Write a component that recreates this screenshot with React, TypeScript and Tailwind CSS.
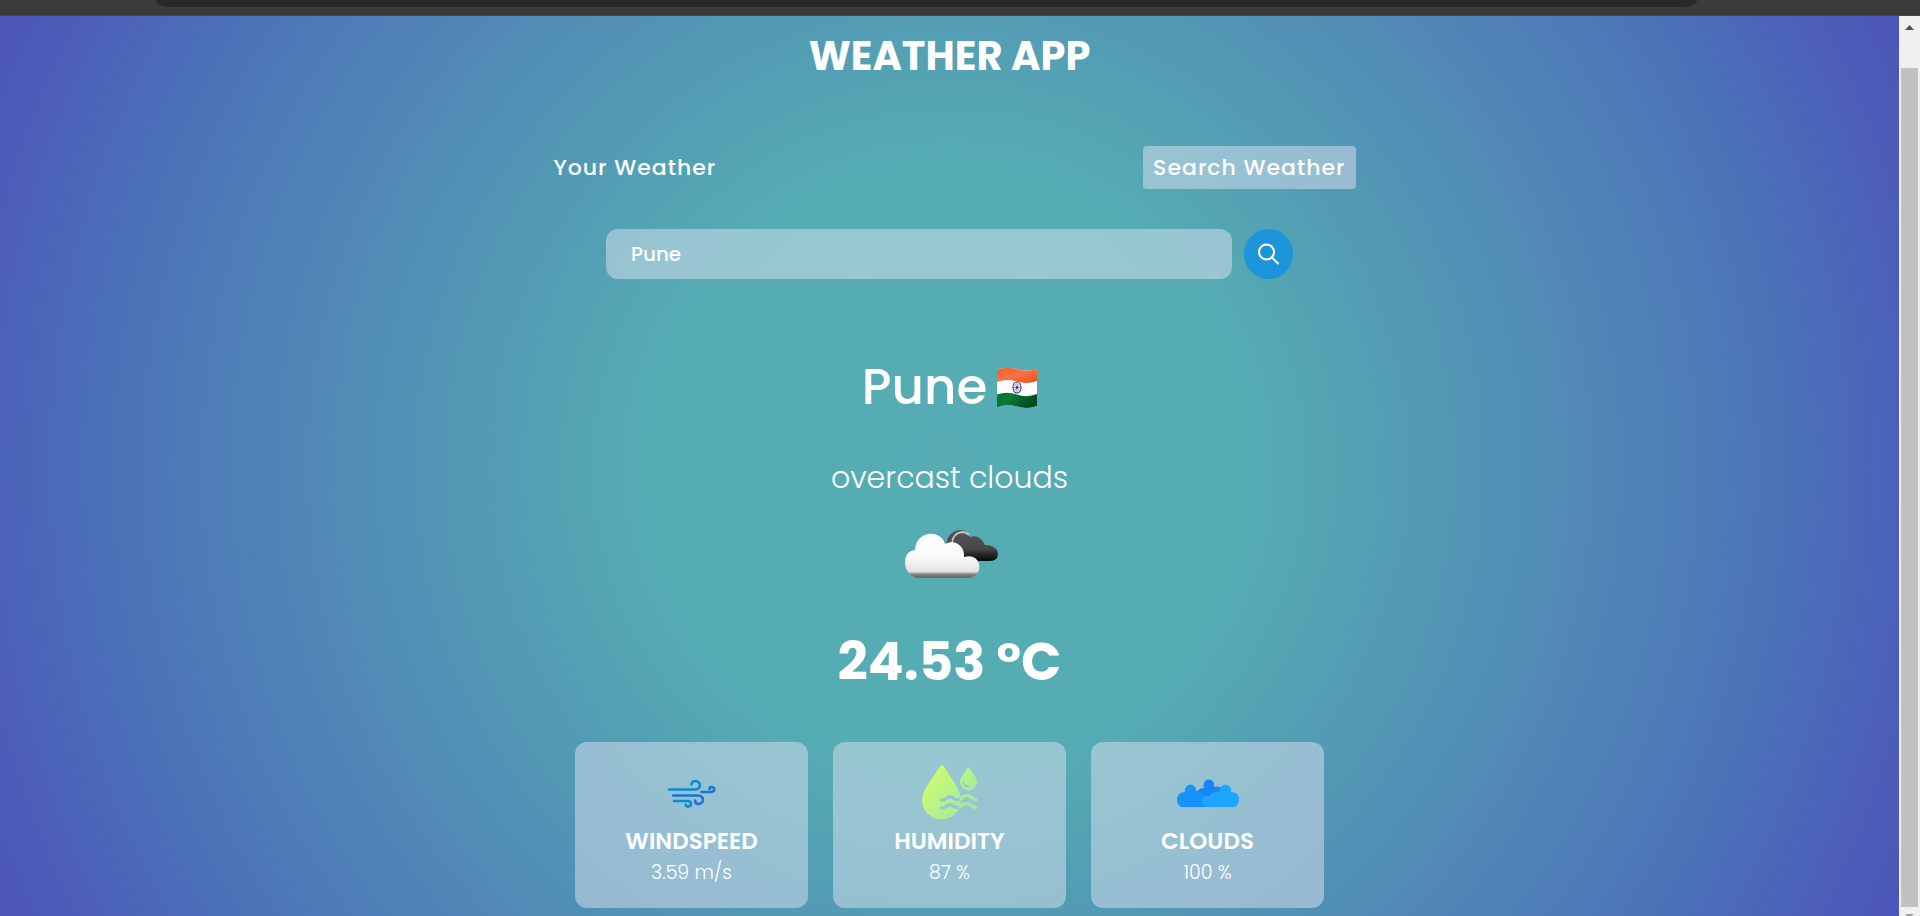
import React from "react";

const FONT = "font-[Poppins,'Open_Sans','Noto_Sans',sans-serif]";

function FlagIcon() {
  return (
    <svg viewBox="0 0 40 40" className="mt-0.5 h-10 w-10" role="img" aria-label="India">
      <defs>
        <linearGradient id="saffron" x1="0" y1="0" x2="1" y2="1">
          <stop offset="0" stopColor="#e8642f" />
          <stop offset="0.5" stopColor="#fb7040" />
          <stop offset="1" stopColor="#ea5220" />
        </linearGradient>
        <linearGradient id="green" x1="0" y1="0" x2="1" y2="0.4">
          <stop offset="0" stopColor="#087038" />
          <stop offset="0.4" stopColor="#0a7a38" />
          <stop offset="1" stopColor="#02481f" />
        </linearGradient>
      </defs>
      <path d="M0 1.600Q10-1.800 20 1.200T40 1V38Q30 41.500 20 38.500T0 39.500Z" fill="#fff" />
      <path d="M0 1.600Q10-1.800 20 1.200T40 1V13Q30 16.500 20 13.500T0 14Z" fill="url(#saffron)" />
      <path d="M0 26.500Q10 23 20 26.500T40 26V38Q30 41.500 20 38.500T0 39.500Z" fill="url(#green)" />
      <ellipse cx="20" cy="19.500" rx="4" ry="5.500" fill="none" stroke="#3d3f88" strokeWidth="1.200" />
      <path d="M20 14v11M16 19.500h8M17.200 15.500l5.600 8M22.800 15.500l-5.600 8" stroke="#6668a5" strokeWidth="0.700" />
      <circle cx="20" cy="19.500" r="1.300" fill="#30327c" />
    </svg>
  );
}

function OvercastIcon() {
  return (
    <svg viewBox="-2 0 100 100" className="h-[100px] w-[100px]" role="img" aria-label="overcast clouds">
      <defs>
        <linearGradient id="darkCloud" x1="0" y1="0" x2="0" y2="1">
          <stop offset="0" stopColor="#555" />
          <stop offset="0.600" stopColor="#474747" />
          <stop offset="1" stopColor="#050505" />
        </linearGradient>
        <linearGradient id="lightCloud" x1="0" y1="0" x2="0" y2="1">
          <stop offset="0" stopColor="#fff" />
          <stop offset="0.550" stopColor="#f8f8f8" />
          <stop offset="0.850" stopColor="#e2e2e2" />
          <stop offset="0.930" stopColor="#777" />
          <stop offset="1" stopColor="#666" />
        </linearGradient>
      </defs>
      <path d="M44 43C45 32 51 27 59 27Q65 27 68 34Q78 31 83 42Q94 42 96 50Q96 58 88 58H60Z" fill="url(#darkCloud)" />
      <path d="M50 40Q51 30 60 29Q64 29 67 32" fill="none" stroke="#c2c2c2" strokeWidth="1.800" />
      <path d="M14 75Q3 70 3 60Q3 48 13 47C14 27 39 26 43 41C53 36 63 43 62 54Q74 51 77 61Q79 71 68 75Z" fill="url(#lightCloud)" />
    </svg>
  );
}

function WindIcon() {
  return (
    <svg viewBox="1 0 50 50" className="h-[50px] w-[50px]" fill="none" strokeLinecap="round" strokeWidth="2.600" aria-hidden="true">
      <path d="M3 21.500H29C36 21.500 35 13 29.500 13Q26 13 25.500 16.500" stroke="#078dd3" />
      <path d="M7 27.500H32C39 27.500 38 36 32.500 36Q29.500 36 29 32.500" stroke="#1775d6" />
      <path d="M8 33H21C27 33 25.500 38.500 22 38.500Q20 38.500 19.700 36.500" stroke="#078dd3" />
      <path d="M35.500 24H44C50 24 49 19 45.500 19Q43.500 19 43.500 21" stroke="#1775d6" />
    </svg>
  );
}

function HumidityIcon() {
  const drop = "M25 1Q26 1 28 4C34 14 44 26 44 36A19.500 19.500 0 0 1 5 36C5 26 16 14 22 4Q24 1 25 1Z";
  return (
    <svg viewBox="3 1 60 56" className="h-14 w-[60px]" fill="none" aria-hidden="true">
      <defs>
        <linearGradient id="lime" gradientUnits="userSpaceOnUse" x1="10" y1="10" x2="58" y2="48">
          <stop stopColor="#d0fb6e" />
          <stop offset="1" stopColor="#9aeaa6" />
        </linearGradient>
        <mask id="waveCut">
          <path d={drop} fill="#fff" />
          <path d="M24 36Q28 36 30 34Q33 32 36 34Q40 37 46 34M24 44Q28 44 30 42Q33 40 36 42Q40 45 46 42" stroke="#000" strokeWidth="3.200" strokeLinecap="round" />
        </mask>
      </defs>
      <rect width="60" height="57" fill="url(#lime)" mask="url(#waveCut)" />
      <path d="M51.500 3Q52 3 53 5Q60 14 60 18A8.500 8.500 0 0 1 43 18Q43 14 50 5Q51 3 51.500 3Z" fill="url(#lime)" />
      <path d="M46.500 18Q47 22 51.500 22.500" stroke="#99c4cf" strokeWidth="1.800" strokeLinecap="round" />
      <path d="M44 35Q46 31.500 50 31.500C54 31.500 54 35.500 59 35.500M43 43Q46 39.500 50 39.500C54 39.500 54 43.500 59 43.500" stroke="url(#lime)" strokeWidth="3" strokeLinecap="round" />
    </svg>
  );
}

function CloudsIcon() {
  return (
    <svg viewBox="0 0 64 40" className="h-10 w-16" aria-hidden="true">
      <path d="M20 24Q20 15 28 15C25 4 40 4 38 14Q47 12 47 20V27H22Z" fill="#1786fb" />
      <path d="M5 34Q1 32 1 27Q1 19 9 19C8 9 21 10 20 18Q27 18 28 25L30 34Z" fill="#1993fc" />
      <path d="M29 34Q26 32 26 28Q26 22 34 23Q37 17 44 19C43 9 56 10 55 19Q63 19 63 27Q63 32 59 34Z" fill="#1ca6ff" />
    </svg>
  );
}

const stats = [
  { label: "WINDSPEED", value: "3.59 m/s", icon: <WindIcon /> },
  { label: "HUMIDITY", value: "87 %", icon: <HumidityIcon /> },
  { label: "CLOUDS", value: "100 %", icon: <CloudsIcon /> },
];

function BrowserEdge() {
  return (
    <div className="h-4 border-b border-[#484848] bg-[#3b3b3b] pr-[223px] pl-[156px]">
      <div className="h-[7px] bg-[#282828] [border-radius:0_0_14px_14px/0_0_7px_7px]" />
    </div>
  );
}

function ScrollRail() {
  return (
    <div className="flex w-[21px] shrink-0 flex-col items-center bg-[#f0f0f0]" aria-hidden="true">
      <svg viewBox="0 0 9 5" className="mt-[9px] h-[5px] w-[9px]"><path d="M0 5L4.500 0L9 5Z" fill="#505050" /></svg>
      <div className="mt-[38px] w-[17px] flex-1 bg-[#c1c1c1]" />
      <svg viewBox="0 0 9 2" className="mt-[7px] h-[2px] w-[9px]"><path d="M0 0H9L7 2H2Z" fill="#a0a0a0" /></svg>
    </div>
  );
}

export default function App() {
  return (
    <div className={`flex min-h-screen flex-col ${FONT} text-white`}>
      <BrowserEdge />
      <div className="flex flex-1">
        <main className="flex flex-1 flex-col items-center bg-[radial-gradient(circle_at_50%_50%,#57acb4_0%,#55acb3_29%,#5189b6_60%,#4b72b8_80%,#4c5fb8_92%,#4c55b8_100%)] pb-2">
          <h1 className="mt-4 text-[40px] leading-[48px] font-bold">WEATHER APP</h1>

          <div className="mt-[66px] flex w-full max-w-[812px] justify-between">
            <button type="button" className="h-[43px] rounded-[4px] px-[10px] text-[22px] font-medium tracking-[1px]">Your Weather</button>
            <button type="button" className="h-[43px] rounded-[4px] bg-[#dbe2ef]/50 px-[10px] text-[22px] font-medium tracking-[1px]">Search Weather</button>
          </div>

          <form className="mt-10 flex w-full max-w-[687px] gap-3" onSubmit={(e) => e.preventDefault()}>
            <input aria-label="Search for a city" defaultValue="Pune" className="h-[50px] min-w-0 flex-1 rounded-[12px] bg-[#dbe2ef]/50 px-[25px] text-[20px] font-medium outline-none" />
            <button type="submit" aria-label="Search" className="flex h-[50px] w-[49px] items-center justify-center rounded-full bg-[#1e94da]">
              <svg viewBox="0 0 24 24" className="h-6 w-6" fill="none" stroke="#fff" strokeWidth="2" strokeLinecap="round" aria-hidden="true">
                <circle cx="9.500" cy="10" r="7.500" />
                <path d="M15 15.500L21 21.500" />
              </svg>
            </button>
          </form>

          <div className="mt-[74px] flex items-center gap-[10px]">
            <h2 className="text-[50px] leading-[68px] font-medium">Pune</h2>
            <FlagIcon />
          </div>
          <p className="mt-8 text-[30px] leading-[50px] font-light">overcast clouds</p>
          <OvercastIcon />
          <p className="mt-[27px] text-[53px] leading-[64px] font-bold">24.53 °C</p>

          <div className="mt-12 flex w-full max-w-[749px] gap-[25px]">
            {stats.map((s) => (
              <section key={s.label} className="flex h-[166px] flex-1 flex-col items-center rounded-[12px] bg-[#dbe2ef]/50 pt-[21px]">
                <div className="flex h-[60px] items-center">{s.icon}</div>
                <h3 className="mt-1 text-[23px] leading-7 font-semibold">{s.label}</h3>
                <p className="mt-1 text-[19px] leading-7 font-light">{s.value}</p>
              </section>
            ))}
          </div>
        </main>
        <ScrollRail />
      </div>
    </div>
  );
}
